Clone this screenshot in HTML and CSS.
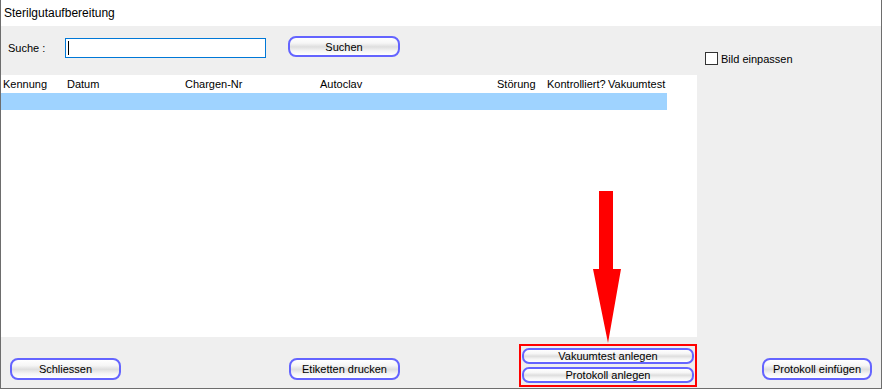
FILE: index.html
```html
<!DOCTYPE html>
<html lang="de">
<head>
  <meta charset="UTF-8">
  <title>Sterilgutaufbereitung</title>
  <link rel="stylesheet" href="styles.css">
</head>
<body>
  <div class="window">
    <div class="title-bar">Sterilgutaufbereitung</div>
    <div class="content">
      <div class="upper">
        <div class="main">
          <div class="search-row">
            <label class="search-label">Suche :</label>
            <div class="search-input"><span class="caret"></span></div>
            <button class="btn btn-search">Suchen</button>
          </div>
          <div class="table">
            <div class="table-head">
              <span>Kennung</span>
              <span>Datum</span>
              <span>Chargen-Nr</span>
              <span>Autoclav</span>
              <span>Störung</span>
              <span>Kontrolliert?</span>
              <span>Vakuumtest</span>
            </div>
            <div class="table-row selected"></div>
          </div>
        </div>
        <div class="side">
          <label class="check"><span class="check-box"></span>Bild einpassen</label>
        </div>
      </div>
      <div class="footer">
        <button class="btn btn-close">Schliessen</button>
        <button class="btn btn-print">Etiketten drucken</button>
        <div class="highlight">
          <button class="btn btn-small">Vakuumtest anlegen</button>
          <button class="btn btn-small">Protokoll anlegen</button>
        </div>
        <button class="btn btn-insert">Protokoll einfügen</button>
      </div>
    </div>
    <svg class="arrow" width="28" height="153" viewBox="0 0 28 153">
      <polygon points="6,0 20,0 20,78 28,78 15,152 0,78 6,78" fill="#ff0000"/>
    </svg>
  </div>
</body>
</html>
```

FILE: styles.css
```css
* {
  margin: 0;
  padding: 0;
  box-sizing: border-box;
}
body {
  background: #fff;
  font-family: 'Liberation Sans', Arial, sans-serif;
  font-size: 11px;
  color: #000;
}
.window {
  position: relative;
  width: 882px;
  height: 389px;
  border-left: 1px solid #6d6d6d;
  border-right: 1px solid #6d6d6d;
  border-bottom: 1px solid #6d6d6d;
  display: flex;
  flex-direction: column;
}
.title-bar {
  height: 26px;
  background: #fff;
  font-size: 12px;
  line-height: 26px;
  padding-left: 3px;
}
.content {
  flex: 1;
  background: #efefef;
  display: flex;
  flex-direction: column;
}
.upper {
  height: 311px;
  display: flex;
}
.main {
  width: 696px;
  display: flex;
  flex-direction: column;
}
.search-row {
  height: 49px;
  display: flex;
  align-items: flex-start;
  padding: 10px 0 0 7px;
}
.search-label {
  width: 57px;
  line-height: 20px;
  margin-top: 2px;
}
.search-input {
  width: 201px;
  height: 20px;
  margin-top: 2px;
  background: #fff;
  border: 1px solid #0078d7;
  padding: 2px 0 0 2px;
}
.caret {
  display: block;
  width: 1px;
  height: 14px;
  background: #000;
}
.btn {
  font-family: 'Liberation Sans', Arial, sans-serif;
  font-size: 11px;
  color: #000;
  height: 22px;
  border: 2px solid #6464ff;
  border-radius: 8px;
  background: linear-gradient(to bottom, #ffffff 0%, #f6f6f6 30%, #dedede 52%, #f4f4f4 75%, #ffffff 100%);
  cursor: pointer;
}
.btn-search {
  width: 112px;
  height: 21px;
  margin-left: 22px;
}
.table {
  flex: 1;
  background: #fff;
}
.table-head {
  height: 18px;
  display: grid;
  grid-template-columns: 64px 118px 135px 177px 50px 61px 61px;
  align-items: center;
}
.table-head span {
  padding-left: 2px;
  white-space: nowrap;
}
.table-row {
  width: 666px;
  height: 17px;
}
.table-row.selected {
  background: #9fd3ff;
}
.side {
  flex: 1;
  padding: 26px 0 0 8px;
}
.check {
  display: flex;
  align-items: center;
  gap: 3px;
}
.check-box {
  width: 13px;
  height: 13px;
  background: #fff;
  border: 1px solid #333;
}
.footer {
  flex: 1;
  display: flex;
  align-items: flex-start;
  padding-left: 9px;
}
.btn-close {
  width: 111px;
  margin-top: 21px;
}
.btn-print {
  width: 111px;
  margin: 21px 0 0 168px;
}
.highlight {
  width: 178px;
  height: 43px;
  margin: 7px 0 0 119px;
  border: 2px solid #ff0000;
  padding: 2px 0 0 1px;
  display: flex;
  flex-direction: column;
  gap: 3px;
}
.btn-small {
  width: 172px;
  height: 16px;
  border-radius: 7px;
  line-height: 12px;
}
.btn-insert {
  width: 110px;
  margin: 21px 0 0 65px;
}
.arrow {
  position: absolute;
  left: 592px;
  top: 191px;
}
```
